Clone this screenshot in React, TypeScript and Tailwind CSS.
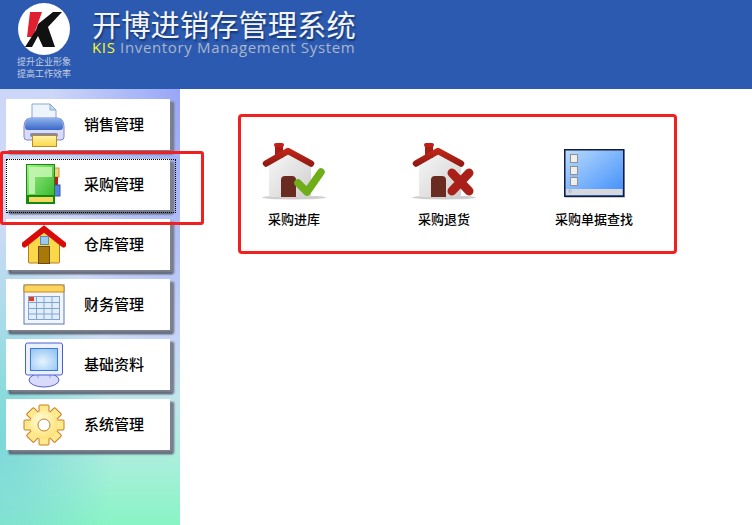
const cjk = "font-['Liberation_Sans','Noto_Sans_CJK_SC',sans-serif]";

function Printer() {
  return (
    <svg width="42" height="44" viewBox="0 0 42 44">
      <defs>
        <linearGradient id="pb" x1="0" y1="0" x2="0" y2="1"><stop offset="0" stopColor="#8fb2ec" /><stop offset="1" stopColor="#3a67c8" /></linearGradient>
        <linearGradient id="py" x1="0" y1="0" x2="0" y2="1"><stop offset="0" stopColor="#fff3a8" /><stop offset="1" stopColor="#f8d848" /></linearGradient>
      </defs>
      <path d="M9 1H27L33 7V16H9Z" fill="#eef4fc" stroke="#8aa8d8" />
      <path d="M27 1V7H33Z" fill="#c4d8f2" stroke="#8aa8d8" />
      <path d="M1 24Q1 15 8 15H34Q41 15 41 24V34Q41 37 38 37H4Q1 37 1 34Z" fill="#d8dcf6" stroke="#7c84c8" />
      <path d="M5 15H37Q40 17 40 24Q40 27 37 27H5Q2 27 2 24Q2 17 5 15Z" fill="url(#pb)" />
      <rect x="7" y="30" width="28" height="4" rx="2" fill="#8088b8" />
      <rect x="9.500" y="32.500" width="24" height="11" fill="url(#py)" stroke="#b88a28" />
    </svg>
  );
}

function Book() {
  return (
    <svg width="36" height="42" viewBox="0 0 36 42">
      <defs>
        <linearGradient id="bg" x1="0" y1="0" x2="1" y2="1"><stop offset="0" stopColor="#a4f08c" /><stop offset="1" stopColor="#2cb424" /></linearGradient>
      </defs>
      <rect x="27" y="4" width="6" height="9" fill="#f6d27a" stroke="#c89838" />
      <rect x="27" y="13" width="5" height="8" fill="#c81818" />
      <rect x="27" y="21" width="7" height="11" fill="#5484e0" stroke="#3058b0" />
      <rect x="0.500" y="0.500" width="28" height="39" fill="url(#bg)" stroke="#138a10" />
      <path d="M3 3H26V13H9V30H3Z" fill="#c8f8b4" opacity="0.85" />
      <rect x="0.500" y="31" width="28" height="9" fill="#128a12" />
      <rect x="3" y="33" width="24" height="5" fill="#f4d860" />
    </svg>
  );
}

function House() {
  return (
    <svg width="44" height="42" viewBox="0 0 44 42">
      <path d="M6.500 19L22 6L37.500 19V38Q37.500 39 36.500 39H7.500Q6.500 39 6.500 38Z" fill="#fbd84a" stroke="#b87a20" />
      <path d="M2.500 20.500L22 5L41.500 20.500" fill="none" stroke="#d80a0a" strokeWidth="6" strokeLinejoin="miter" strokeLinecap="round" />
      <rect x="18.500" y="12.500" width="8" height="8" fill="#9cc8f0" stroke="#5a88c0" />
      <rect x="16.500" y="22.500" width="11" height="17" fill="#a87808" stroke="#6c4c08" />
    </svg>
  );
}

function Calendar() {
  return (
    <svg width="42" height="42" viewBox="0 0 42 42">
      <rect x="1" y="1" width="40" height="39" fill="#f2f6fc" stroke="#5a78b8" />
      <path d="M1 8V3Q1 1 3 1H39Q41 1 41 3V8Z" fill="#fbd45e" stroke="#c88a20" />
      <rect x="5.500" y="12.500" width="31" height="23" fill="#e4ecfa" stroke="#7ca8d8" />
      <path d="M13.500 12.500V35.500M21 12.500V35.500M29 12.500V35.500M5.500 18.500H36.500M5.500 24.500H36.500M5.500 30H36.500" stroke="#7ca8d8" fill="none" />
      <rect x="6" y="13" width="5" height="4" fill="#f03808" />
    </svg>
  );
}

function Monitor() {
  return (
    <svg width="40" height="46" viewBox="0 0 40 46">
      <defs>
        <radialGradient id="ms" cx="0.45" cy="0.6" r="0.7"><stop offset="0" stopColor="#e4f4ff" /><stop offset="1" stopColor="#94c4f2" /></radialGradient>
      </defs>
      <ellipse cx="20" cy="38" rx="15" ry="7" fill="#d8dcfa" stroke="#5a60c8" />
      <path d="M14 32V36M26 32V36" stroke="#9098d8" />
      <rect x="1.500" y="1" width="37" height="32" rx="2" fill="#eaf0fe" stroke="#4860d0" />
      <rect x="6.500" y="6.500" width="27" height="22" fill="url(#ms)" stroke="#3c7ad8" />
    </svg>
  );
}

function Gear() {
  const teeth = [0, 45, 90, 135, 180, 225, 270, 315];
  return (
    <svg width="42" height="42" viewBox="0 0 42 42">
      <defs>
        <radialGradient id="gg" cx="0.4" cy="0.35" r="0.7"><stop offset="0" stopColor="#fffde0" /><stop offset="1" stopColor="#fde070" /></radialGradient>
      </defs>
      {teeth.map((a) => (
        <rect key={a} x="16" y="1" width="10" height="12" rx="1" fill="#fee98c" stroke="#c87a20" transform={`rotate(${a} 21 21)`} />
      ))}
      <circle cx="21" cy="21" r="14" fill="url(#gg)" />
      <circle cx="21" cy="21" r="6" fill="#fff" stroke="#c87a20" />
    </svg>
  );
}

function HouseSmall({ badge }: { badge: "ok" | "no" }) {
  return (
    <svg width="64" height="60" viewBox="0 -2 64 60">
      <defs>
        <linearGradient id={`w${badge}`} x1="0" y1="0" x2="1" y2="1"><stop offset="0" stopColor="#f8f8f8" /><stop offset="1" stopColor="#cfcfcf" /></linearGradient>
        <linearGradient id={`r${badge}`} gradientUnits="userSpaceOnUse" x1="0" y1="5" x2="0" y2="25"><stop offset="0" stopColor="#c8281c" /><stop offset="1" stopColor="#8c1810" /></linearGradient>
      </defs>
      <ellipse cx="32" cy="55.500" rx="32" ry="2" fill="#cfcfcf" />
      <path d="M7 22L26 9L49 22V52Q49 55 46 55H10Q7 55 7 52Z" fill={`url(#w${badge})`} />
      <rect x="13" y="3" width="8" height="13" fill="#a81c14" />
      <rect x="12" y="1" width="10" height="4" rx="2" fill="#c02018" />
      <path d="M4 21.500L26 9L49 21.500" fill="none" stroke={`url(#r${badge})`} strokeWidth="6.500" strokeLinecap="round" strokeLinejoin="round" />
      <path d="M19 55V38Q19 34 23 34H30Q34 34 34 38V55Z" fill="#6a2c20" />
      {badge === "ok" ? (
        <path d="M36 41L45 50L59 30" fill="none" stroke="#6fae18" strokeWidth="7.500" strokeLinecap="round" strokeLinejoin="round" />
      ) : (
        <path d="M40 31L57 49M57 31L40 49" fill="none" stroke="#a82018" strokeWidth="9" strokeLinecap="round" />
      )}
    </svg>
  );
}

function Search() {
  return (
    <svg className="mt-[9px]" width="61" height="49" viewBox="0 0 61 49">
      <defs>
        <linearGradient id="sb" x1="0" y1="0" x2="1" y2="1"><stop offset="0" stopColor="#bcdcfc" /><stop offset="1" stopColor="#3c8cfc" /></linearGradient>
      </defs>
      <rect x="1" y="1" width="60" height="48" fill="#cccccc" />
      <rect x="0.750" y="0.750" width="59" height="46.500" fill="url(#sb)" stroke="#101c44" strokeWidth="1.500" />
      <rect x="2" y="40" width="56.500" height="6" fill="#d8d8dc" />
      {[6, 18, 29].map((y) => (
        <rect key={y} x="6.500" y={y - 0.5} width="7" height="8" fill="#eeeeee" stroke="#909090" />
      ))}
      <circle cx="6" cy="42" r="2" fill="#b8c4d8" />
    </svg>
  );
}

const menu = [
  { label: "销售管理", icon: <Printer /> },
  { label: "采购管理", icon: <Book />, active: true },
  { label: "仓库管理", icon: <House /> },
  { label: "财务管理", icon: <Calendar /> },
  { label: "基础资料", icon: <Monitor /> },
  { label: "系统管理", icon: <Gear /> },
];

const actions = [
  { label: "采购进库", icon: <HouseSmall badge="ok" /> },
  { label: "采购退货", icon: <HouseSmall badge="no" /> },
  { label: "采购单据查找", icon: <Search /> },
];

export default function App() {
  return (
    <div className={`relative flex h-[525px] w-[752px] flex-col overflow-hidden bg-white ${cjk}`}>
      <header className="flex h-[89px] shrink-0 bg-[#2c5ab0]">
        <div className="ml-[17px] mt-[3px] flex w-[54px] flex-col items-center">
          <svg width="52" height="52" viewBox="0 0 52 52">
            <circle cx="26" cy="26" r="26" fill="#fff" />
            <path d="M12 9H24L15 34H9Z" fill="#e02030" />
            <path d="M35 9H44L30 24L37 44H25L20 33L14 44H7L18 27L20 21Z" fill="#111" />
          </svg>
          <div className="mt-[1px] w-[60px] text-center text-[9px] leading-[12px] text-[#c4cfe4]">
            <div>提升企业形象</div>
            <div>提高工作效率</div>
          </div>
        </div>
        <div className="ml-[21px] mt-[11px]">
          <div className="text-[29.3px] leading-[29px] text-[#f2f4f8] [text-shadow:1px_2px_2px_#12336e]">开博进销存管理系统</div>
          <div className="font-['Open_Sans',sans-serif] text-[15px] leading-[15px] tracking-[0.65px] text-[#aab6ca]">
            <span className="text-[#f8f820]">KIS</span> Inventory Management System
          </div>
        </div>
      </header>
      <div className="flex min-h-0 flex-1">
        <aside className="relative flex w-[180px] shrink-0 flex-col gap-[9px] bg-[radial-gradient(ellipse_at_100%_0%,#98a6f6_0%,#98a6f600_50%),radial-gradient(ellipse_at_0%_80%,#7cd8d8_0%,#7cd8d800_45%),linear-gradient(180deg,#ccd6f8_0%,#d2def8_55%,#b8eae6_78%,#a4f0d8_88%,#88f4c4_100%)] pl-[6px] pt-[10px]">
          {menu.map((m) => (
            <div
              key={m.label}
              className="relative flex h-[51px] w-[164px] items-center bg-white shadow-[4px_3px_2px_#7a8090,3px_4px_2px_#3c4250]"
            >
              <div className="flex w-[75px] shrink-0 justify-center">{m.icon}</div>
              <span className="ml-[3px] mt-[1px] text-[15px] font-medium text-black">{m.label}</span>
              {m.active && (
                <div className="absolute -bottom-[3px] left-0 -right-[6px] top-0 border border-dotted border-black" />
              )}
            </div>
          ))}
        </aside>
        <main className="flex flex-1 items-start pl-[39px] pt-[51px]">
          {actions.map((a) => (
            <div key={a.label} className="flex w-[150px] flex-col items-center">
              <div className="flex h-[60px] items-start">{a.icon}</div>
              <span className="mt-[12px] text-[13px] font-medium leading-[16px] text-black">{a.label}</span>
            </div>
          ))}
        </main>
      </div>
      <div className="absolute left-0 top-[151px] h-[74px] w-[204px] rounded-[3px] border-[3px] border-[#f02020]" />
      <div className="absolute left-[238px] top-[114px] h-[140px] w-[439px] rounded-[4px] border-[3px] border-[#f02020]" />
    </div>
  );
}
